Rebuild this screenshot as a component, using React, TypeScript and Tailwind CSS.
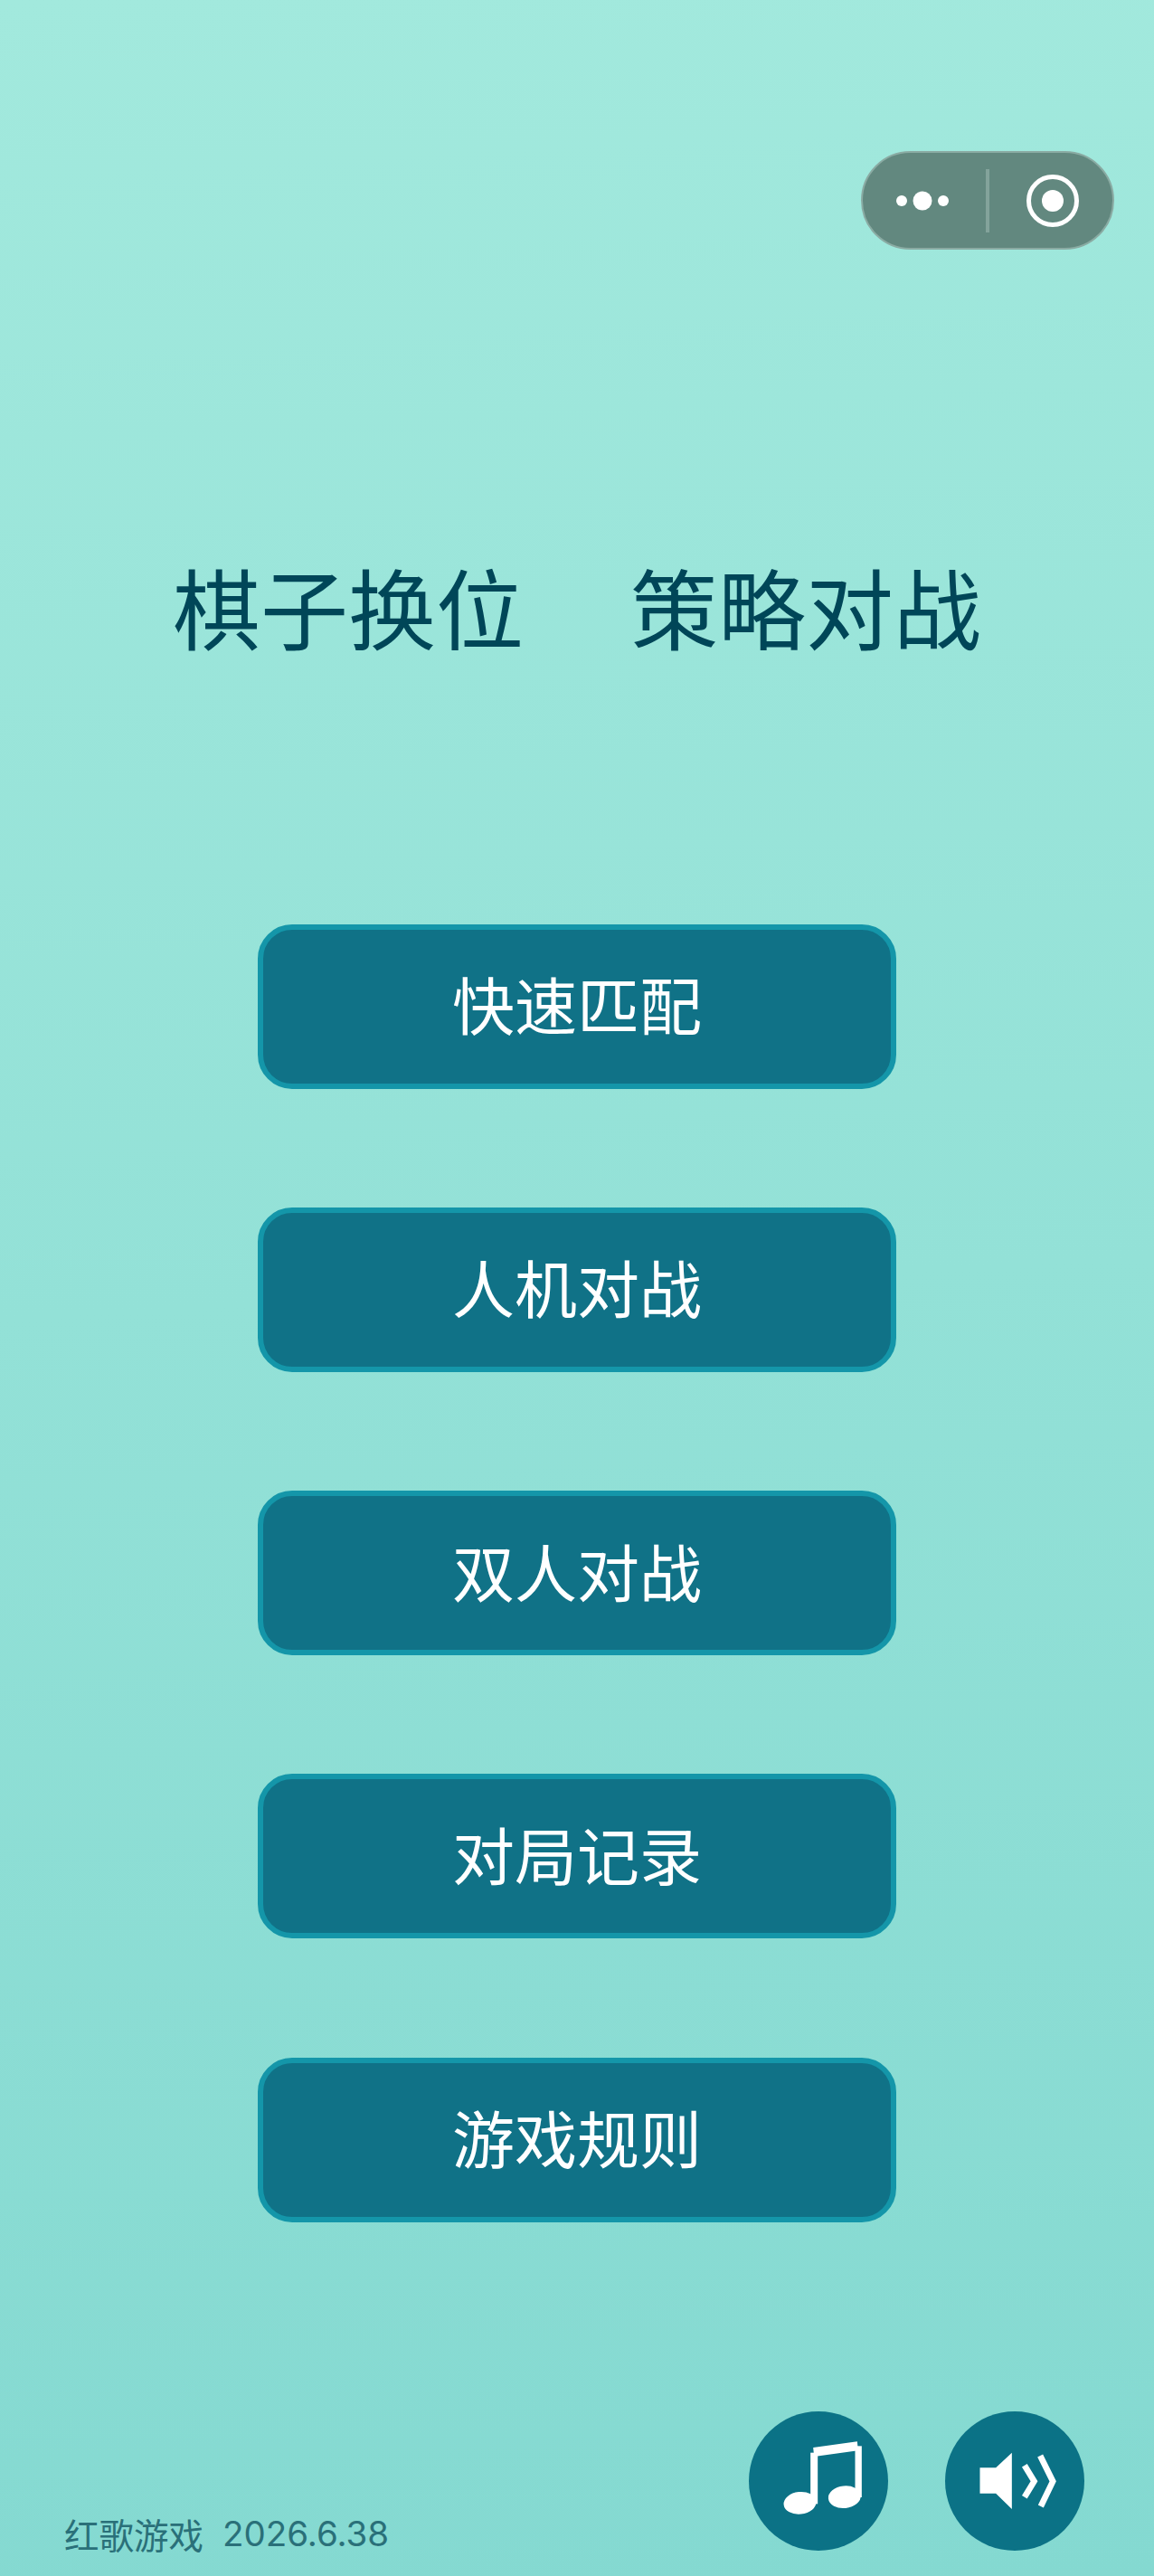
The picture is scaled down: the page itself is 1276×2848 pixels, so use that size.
const cjk = "font-['Noto_Sans_CJK_SC','Noto_Sans',sans-serif]";

const labels = ['快速匹配', '人机对战', '双人对战', '对局记录', '游戏规则'];

function Capsule() {
  return (
    <div className="absolute right-[44px] top-[167px] flex h-[109px] w-[280px] items-center rounded-full border-2 border-[#8aaba3] bg-[#62887f]">
      <svg viewBox="0 0 280 109" className="absolute -inset-[2px] h-[109px] w-[280px]">
        <circle cx="45" cy="55" r="6" fill="#fff" />
        <circle cx="68" cy="55" r="10.5" fill="#fff" />
        <circle cx="91" cy="55" r="6" fill="#fff" />
        <rect x="138" y="20" width="4" height="70" fill="#83a39b" />
        <circle cx="212" cy="55" r="26.5" fill="none" stroke="#fff" strokeWidth="5" />
        <circle cx="212" cy="55" r="12" fill="#fff" />
      </svg>
    </div>
  );
}

function MusicIcon() {
  return (
    <svg viewBox="84 78 461 462" className="h-[154px] w-[154px]">
      <polygon points="297,198 443,178 446,208 300,228" fill="#fff" />
      <rect x="288" y="215" width="24" height="170" fill="#fff" />
      <rect x="436" y="193" width="22" height="170" fill="#fff" />
      <ellipse cx="253" cy="382" rx="54" ry="37" fill="#fff" transform="rotate(-6 253 382)" />
      <ellipse cx="401" cy="362" rx="54" ry="37" fill="#fff" transform="rotate(-6 401 362)" />
    </svg>
  );
}

function SoundIcon() {
  return (
    <svg viewBox="735 78 461 462" className="h-[154px] w-[154px]">
      <polygon points="850,265 903,265 956,215 956,402 903,350 850,350" fill="#fff" />
      <polyline points="998,257 1030,310 998,362" fill="none" stroke="#fff" strokeWidth="20" />
      <polyline points="1050,225 1092,310 1052,393" fill="none" stroke="#fff" strokeWidth="20" />
    </svg>
  );
}

export default function App() {
  return (
    <div className={`relative flex h-[2848px] w-[1276px] flex-col items-center overflow-hidden bg-[linear-gradient(177deg,#a2e9dd_0%,#84d9d1_100%)] ${cjk}`}>
      <Capsule />

      <h1 className="mt-[609px] flex h-[120px] items-center gap-[24px] text-[97px] font-normal leading-[120px] text-[#004658]">
        <span>棋子换位</span>
        <span className="ml-[94px]">策略对战</span>
      </h1>

      <div className="mt-[292.5px] flex flex-col gap-[131.25px]">
        {labels.map((label) => (
          <button
            key={label}
            className="flex h-[182px] w-[706px] items-center justify-center rounded-[38px] border-[6px] border-[#1496a9] bg-[#107287] pb-[6px] text-[69px] leading-none text-white"
          >
            {label}
          </button>
        ))}
      </div>

      <footer className="mt-auto mb-[28px] flex w-full items-end justify-between pl-[71px] pr-[77px]">
        <div className="mb-[-8px] flex items-center gap-[21px] text-[38.5px] leading-[54px] text-[#2a7079]">
          <span>红歌游戏</span>
          <span className="font-['Inter',sans-serif] text-[38.5px] font-normal">2026.6.38</span>
        </div>
        <div className="flex gap-[63px]">
          <div className="h-[154px] w-[154px] rounded-full bg-[#0b7286]">
            <MusicIcon />
          </div>
          <div className="h-[154px] w-[154px] rounded-full bg-[#0b7286]">
            <SoundIcon />
          </div>
        </div>
      </footer>
    </div>
  );
}
